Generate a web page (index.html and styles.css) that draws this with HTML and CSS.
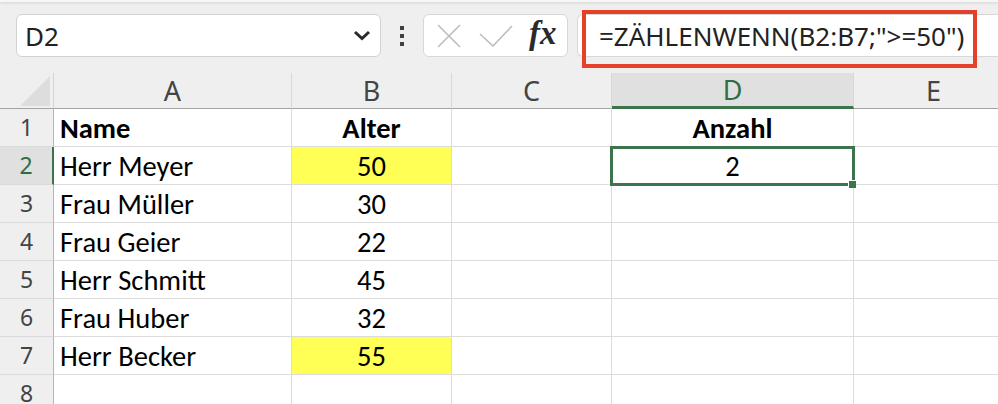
FILE: index.html
```html
<!DOCTYPE html>
<html>
<head>
<meta http-equiv="Content-Type" content="text/html; charset=utf-8"/>
<title>ZÄHLENWENN</title>
<link rel="stylesheet" href="styles.css">
</head>
<body>

<div class="ribbon-edge"></div>

<div class="formula-bar">
  <div class="name-box">
    <span class="name-text">D2</span>
    <svg class="chevron" width="18" height="11" viewBox="0 0 18 11">
      <path d="M2 2 L9 8.5 L16 2" fill="none" stroke="#2b2b2b" stroke-width="3"/>
    </svg>
  </div>
  <div class="grip"><i></i><i></i><i></i></div>
  <div class="fx-box">
    <svg width="24" height="24" viewBox="0 0 24 24">
      <path d="M1 1 L23 23 M23 1 L1 23" stroke="#bdbdbd" stroke-width="1.6" fill="none"/>
    </svg>
    <svg width="34" height="22" viewBox="0 0 34 22">
      <path d="M1 9 L14 21 L33 1" stroke="#bdbdbd" stroke-width="1.6" fill="none"/>
    </svg>
    <span class="fx">fx</span>
  </div>
  <div class="formula-box">
    <span class="formula-text">=ZÄHLENWENN(B2:B7;"&gt;=50")</span>
    <div class="highlight"></div>
  </div>
</div>

<div class="sheet">
  <div class="corner"><div class="corner-tri"></div></div>
  <div class="col-head">A</div>
  <div class="col-head">B</div>
  <div class="col-head">C</div>
  <div class="col-head active">D</div>
  <div class="col-head">E</div>

  <div class="row-head">1</div>
  <div class="cell bold">Name</div>
  <div class="cell bold center">Alter</div>
  <div class="cell"></div>
  <div class="cell bold center">Anzahl</div>
  <div class="cell"></div>

  <div class="row-head active">2</div>
  <div class="cell">Herr Meyer</div>
  <div class="cell center yellow">50</div>
  <div class="cell"></div>
  <div class="cell center selected">2</div>
  <div class="cell"></div>

  <div class="row-head">3</div>
  <div class="cell">Frau Müller</div>
  <div class="cell center">30</div>
  <div class="cell"></div>
  <div class="cell"></div>
  <div class="cell"></div>

  <div class="row-head">4</div>
  <div class="cell">Frau Geier</div>
  <div class="cell center">22</div>
  <div class="cell"></div>
  <div class="cell"></div>
  <div class="cell"></div>

  <div class="row-head">5</div>
  <div class="cell">Herr Schmitt</div>
  <div class="cell center">45</div>
  <div class="cell"></div>
  <div class="cell"></div>
  <div class="cell"></div>

  <div class="row-head">6</div>
  <div class="cell">Frau Huber</div>
  <div class="cell center">32</div>
  <div class="cell"></div>
  <div class="cell"></div>
  <div class="cell"></div>

  <div class="row-head">7</div>
  <div class="cell">Herr Becker</div>
  <div class="cell center yellow">55</div>
  <div class="cell"></div>
  <div class="cell"></div>
  <div class="cell"></div>

  <div class="row-head">8</div>
  <div class="cell"></div>
  <div class="cell"></div>
  <div class="cell"></div>
  <div class="cell"></div>
  <div class="cell"></div>
</div>

</body>
</html>
```

FILE: styles.css
```css
html, body {
  margin: 0;
  padding: 0;
  width: 998px;
  height: 404px;
  overflow: hidden;
  background-color: #efefef;
  font-family: "Segoe UI", "Noto Sans", sans-serif;
  color: #222;
}

.ribbon-edge {
  height: 2px;
  background-color: #f6f6f6;
  box-shadow: 0 1px 3px rgba(0, 0, 0, 0.14);
}

/* formula bar */
.formula-bar {
  height: 71px;
  box-sizing: border-box;
  padding: 12px 0 0 16px;
  display: flex;
  align-items: flex-start;
  overflow: hidden;
}

.name-box {
  width: 365px;
  height: 43px;
  box-sizing: border-box;
  background: white;
  border: 1px solid #d2d2d2;
  border-radius: 6px;
  display: flex;
  align-items: center;
  justify-content: space-between;
  padding: 0 9px 0 8px;
}

.name-text {
  font-size: 26px;
  line-height: 1;
}

.grip {
  width: 4px;
  margin: 12px 19px 0 19px;
  display: flex;
  flex-direction: column;
  gap: 4px;
}

.grip i {
  display: block;
  width: 4px;
  height: 4px;
  background-color: #404040;
}

.fx-box {
  width: 145px;
  height: 43px;
  box-sizing: border-box;
  background: white;
  border: 1px solid #d8d8d8;
  border-radius: 6px;
  display: flex;
  align-items: center;
  padding: 0 0 0 13px;
  gap: 19px;
}

.fx-box svg + svg {
  margin-left: -1px;
}

.fx {
  font-family: "Liberation Serif", serif;
  font-style: italic;
  font-weight: bold;
  font-size: 33px;
  line-height: 1;
  color: #2a2a2a;
  margin: -4px 0 0 -3px;
}

.formula-box {
  position: relative;
  flex: 1;
  margin-left: 9px;
  height: 43px;
  box-sizing: border-box;
  background: white;
  border: 1px solid #d8d8d8;
  border-right: none;
  border-radius: 6px 0 0 6px;
  display: flex;
  align-items: center;
  padding-left: 21px;
}

.formula-text {
  font-size: 26px;
  line-height: 1;
  white-space: nowrap;
}

.highlight {
  position: absolute;
  left: 4px;
  top: -5px;
  width: 395px;
  height: 58px;
  box-sizing: border-box;
  border: 4px solid #e5402a;
}

/* sheet grid */
.sheet {
  width: 998px;
  height: 331px;
  overflow: hidden;
  display: grid;
  grid-template-columns: 54px 238px 160px 160px 242px 160px;
  grid-template-rows: 36px;
  grid-auto-rows: 38px;
  background: white;
}

.corner {
  background-color: #efefef;
  border-right: 1px solid #d4d4d4;
  border-bottom: 1px solid #a3a3a3;
  display: flex;
  align-items: flex-end;
  justify-content: flex-end;
  padding: 0 3px 2px 0;
}

.corner-tri {
  width: 30px;
  height: 30px;
  background-color: #dddddd;
  clip-path: polygon(100% 0, 100% 100%, 0 100%);
}

.col-head {
  background-color: #efefef;
  border-right: 1px solid #d8d8d8;
  border-bottom: 1px solid #a3a3a3;
  display: flex;
  align-items: center;
  justify-content: center;
  font-size: 27px;
  line-height: 1;
  color: #444;
  padding-bottom: 1px;
}

.col-head.active {
  background-color: #e0e0e0;
  border-bottom: 3px solid #3c744c;
  color: #2f6e45;
  padding-bottom: 0;
}

.row-head {
  background-color: #efefef;
  border-right: 1px solid #b4b4b4;
  border-bottom: 1px solid #dadada;
  display: flex;
  align-items: center;
  justify-content: center;
  font-size: 23px;
  line-height: 1;
  color: #444;
}

.row-head.active {
  background-color: #e0e0e0;
  border-right: 2px solid #3c744c;
  color: #2f6e45;
}

.cell {
  border-right: 1px solid #dcdcdc;
  border-bottom: 1px solid #dcdcdc;
  display: flex;
  align-items: center;
  padding: 4px 6px 0 6px;
  font-family: Calibri, Carlito, "Open Sans", sans-serif;
  font-size: 28.5px;
  line-height: 1;
  color: #000;
  white-space: nowrap;
}

.center {
  justify-content: center;
}

.bold {
  font-weight: bold;
}

.yellow {
  background-color: #ffff55;
}

.selected {
  position: relative;
}

.selected::before {
  content: "";
  position: absolute;
  left: -2px;
  top: -1px;
  right: -2px;
  bottom: -2px;
  border: 3px solid #3c744c;
}

.selected::after {
  content: "";
  position: absolute;
  right: -3px;
  bottom: -4px;
  width: 7px;
  height: 7px;
  background-color: #3c744c;
  border-left: 1px solid white;
  border-top: 1px solid white;
}
```
